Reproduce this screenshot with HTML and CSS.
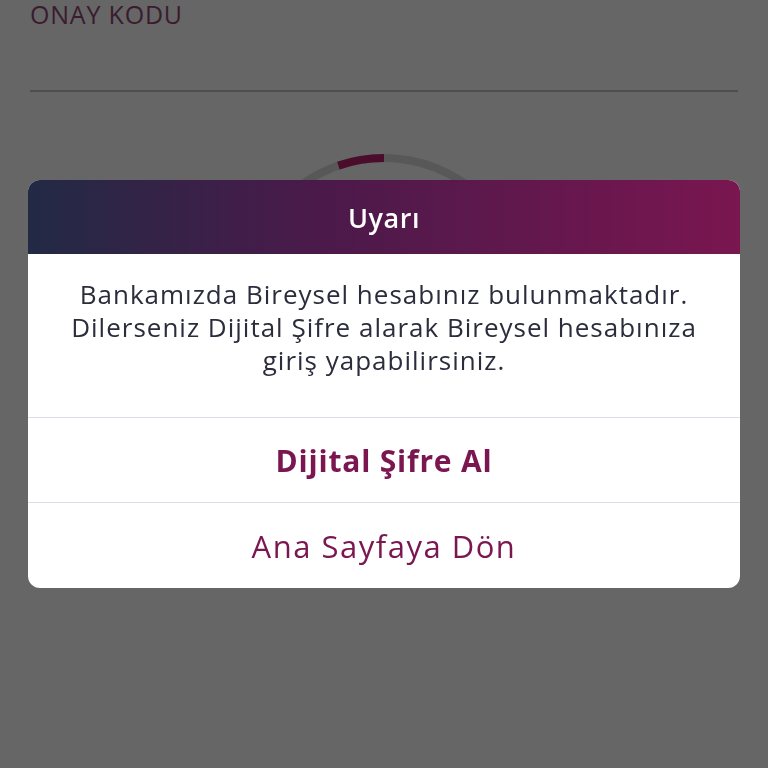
FILE: index.html
```html
<!DOCTYPE html>
<html lang="tr">
<head>
<meta charset="utf-8">
<link rel="stylesheet" href="styles.css">
</head>
<body>
<div class="page">
  <div class="field">
    <div class="label">ONAY KODU</div>
    <div class="underline"></div>
  </div>
  <div class="spinner">
    <svg width="300" height="300" viewBox="0 0 300 300">
      <circle cx="150" cy="150" r="140" fill="none" stroke="#585858" stroke-width="8"/>
      <path d="M150 10 A140 140 0 0 0 104.4 17.6" fill="none" stroke="#4a0d2c" stroke-width="8"/>
    </svg>
  </div>
</div>
<div class="overlay">
  <div class="dialog">
    <div class="dialog-head">Uyarı</div>
    <div class="dialog-body">Bankamızda Bireysel hesabınız bulunmaktadır.<br>Dilerseniz Dijital Şifre alarak Bireysel hesabınıza<br>giriş yapabilirsiniz.</div>
    <div class="dialog-btn primary">Dijital Şifre Al</div>
    <div class="dialog-btn">Ana Sayfaya Dön</div>
  </div>
</div>
</body>
</html>
```
FILE: styles.css
```css
html, body {
  margin: 0;
  padding: 0;
  background: #666666;
  font-family: "Open Sans", "Noto Sans", sans-serif;
}
.page {
  padding: 0 30px;
}
.label {
  font-size: 25px;
  line-height: 26px;
  margin-top: 1px;
  letter-spacing: 0.8px;
  color: #3a1c2e;
}
.underline {
  margin-top: 63px;
  height: 2px;
  background: #4e4e4e;
}
.spinner {
  display: flex;
  justify-content: center;
  margin-top: 56px;
}
.overlay {
  position: fixed;
  inset: 0;
  display: flex;
  align-items: center;
  justify-content: center;
}
.dialog {
  width: 712px;
  background: #ffffff;
  border-radius: 12px;
  overflow: hidden;
}
.dialog-head {
  height: 74px;
  display: flex;
  align-items: center;
  justify-content: center;
  background: linear-gradient(90deg, #222a45 0%, #4a1a4a 40%, #7a1650 100%);
  color: #ffffff;
  font-size: 27px;
  letter-spacing: 0.5px;
  font-weight: 600;
}
.dialog-body {
  padding: 24px 10px 40px;
  text-align: center;
  font-size: 26px;
  line-height: 33px;
  letter-spacing: 1px;
  color: #2b2c3c;
  border-bottom: 1px solid #dddde8;
}
.dialog-btn {
  height: 85px;
  display: flex;
  align-items: center;
  justify-content: center;
  font-size: 31px;
  letter-spacing: 1.5px;
  color: #7a1650;
}
.dialog-btn.primary {
  height: 84px;
  font-size: 30px;
  font-weight: 700;
  letter-spacing: 0.8px;
  border-bottom: 1px solid #dddde8;
}
```
